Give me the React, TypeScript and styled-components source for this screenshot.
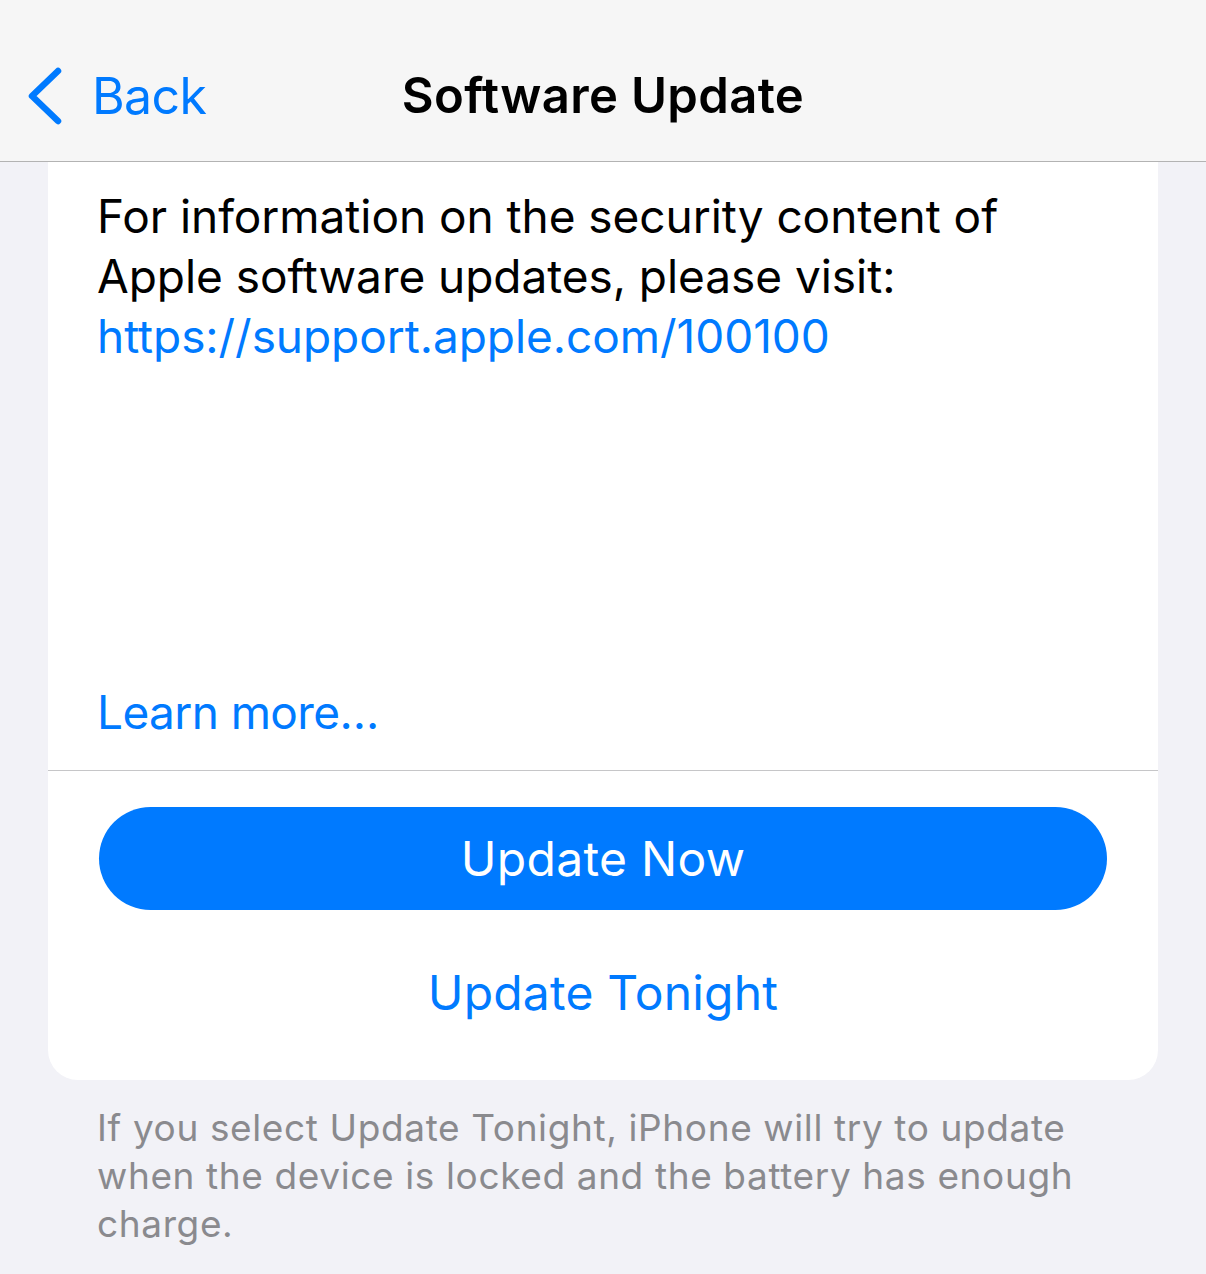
import React from "react";
import styled, { createGlobalStyle } from "styled-components";

const Global = createGlobalStyle`
  html, body {
    margin: 0;
    padding: 0;
    background: #f2f2f7;
  }
  body {
    font-family: Inter, "Noto Sans", "Liberation Sans", sans-serif;
    -webkit-font-smoothing: antialiased;
  }
`;

const Screen = styled.div`
  width: 1206px;
  height: 1274px;
  overflow: hidden;
  background: #f2f2f7;
  display: flex;
  flex-direction: column;
`;

const NavBar = styled.header`
  height: 162px;
  padding-top: 30px;
  box-sizing: border-box;
  flex-shrink: 0;
  background: #f6f6f6;
  border-bottom: 1px solid #b3b3b3;
  display: grid;
  grid-template-columns: 1fr auto 1fr;
  align-items: center;
`;

const BackButton = styled.button`
  justify-self: start;
  display: flex;
  align-items: center;
  gap: 29px;
  padding: 0 0 0 27px;
  border: none;
  background: none;
  color: #007aff;
  font-family: inherit;
  font-size: 50px;
  letter-spacing: -0.6px;
  cursor: pointer;
`;

const Title = styled.h1`
  margin: 0;
  font-size: 49px;
  font-weight: 600;
  letter-spacing: 0.35px;
  color: #000;
`;

const Content = styled.main`
  padding: 0 48px;
  display: flex;
  flex-direction: column;
`;

const Card = styled.section`
  background: #fff;
  border-radius: 0 0 30px 30px;
  display: flex;
  flex-direction: column;
`;

const Notes = styled.div`
  padding: 24px 49px 0;
  height: 608px;
  box-sizing: border-box;
  display: flex;
  flex-direction: column;
  justify-content: space-between;
`;

const BodyText = styled.p`
  margin: 0;
  font-size: 46px;
  line-height: 60px;
  letter-spacing: -0.05px;
  color: #000;
`;

const Link = styled.a`
  color: #007aff;
  text-decoration: none;
`;

const LearnMore = styled.a`
  display: block;
  font-size: 46px;
  line-height: 60px;
  letter-spacing: -0.6px;
  color: #007aff;
  text-decoration: none;
  padding-bottom: 28px;
`;

const Divider = styled.hr`
  margin: 0;
  border: none;
  border-top: 1.5px solid #c6c6c8;
`;

const Actions = styled.div`
  padding: 36px 51px 0;
  display: flex;
  flex-direction: column;
  align-items: stretch;
  height: 309px;
  box-sizing: border-box;
`;

const PrimaryButton = styled.button`
  height: 103px;
  border: none;
  border-radius: 52px;
  background: #007aff;
  color: #fff;
  font-family: inherit;
  font-size: 48px;
  letter-spacing: 0.3px;
  cursor: pointer;
`;

const SecondaryButton = styled.button`
  margin-top: 26px;
  height: 112px;
  border: none;
  background: none;
  color: #007aff;
  font-family: inherit;
  font-size: 48px;
  letter-spacing: 0.2px;
  cursor: pointer;
`;

const Footnote = styled.p`
  margin: 0;
  padding: 24px 49px 0;
  font-size: 37px;
  line-height: 48px;
  letter-spacing: 0.62px;
  color: #8a8a8e;
`;

const Chevron = () => (
  <svg width="36" height="58" viewBox="0 0 36 58" aria-hidden="true">
    <path
      d="M31 4 L5 29 L31 54"
      fill="none"
      stroke="#007aff"
      strokeWidth="6.5"
      strokeLinecap="round"
      strokeLinejoin="round"
    />
  </svg>
);

export default function App() {
  return (
    <>
      <Global />
      <Screen>
        <NavBar>
          <BackButton>
            <Chevron />
            Back
          </BackButton>
          <Title>Software Update</Title>
          <div />
        </NavBar>
        <Content>
          <Card>
            <Notes>
              <BodyText>
                For information on the security content of
                <br />
                Apple software updates, please visit:
                <br />
                <Link href="#">https://support.apple.com/100100</Link>
              </BodyText>
              <LearnMore href="#">Learn more…</LearnMore>
            </Notes>
            <Divider />
            <Actions>
              <PrimaryButton>Update Now</PrimaryButton>
              <SecondaryButton>Update Tonight</SecondaryButton>
            </Actions>
          </Card>
          <Footnote>
            If you select Update Tonight, iPhone will try to update when the
            device is locked and the battery has enough charge.
          </Footnote>
        </Content>
      </Screen>
    </>
  );
}
